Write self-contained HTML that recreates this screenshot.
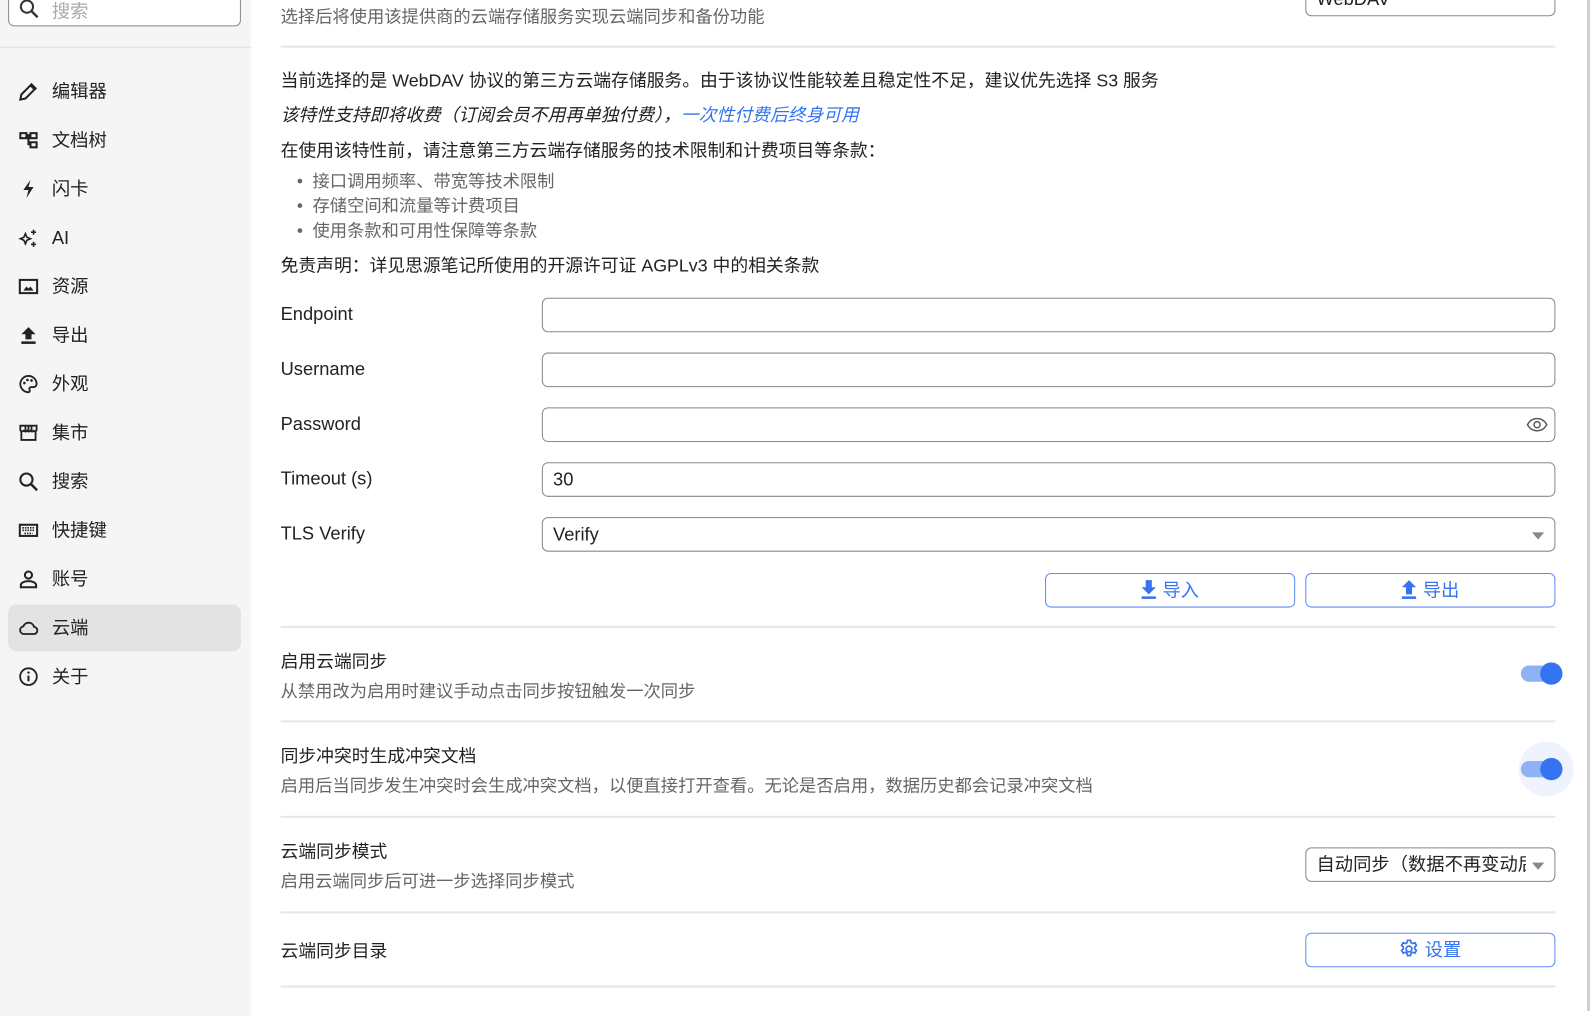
<!DOCTYPE html>
<html><head><meta charset="utf-8"><style>
*{box-sizing:border-box;margin:0;padding:0}
body{width:1592px;height:1011px;overflow:hidden;background:#fff;font-family:"Liberation Sans","Noto Sans CJK SC",sans-serif;color:#222;position:relative}
#wrap{position:absolute;left:0;top:0;width:1566px;height:995px;transform:scale(1.0166,1.016);transform-origin:0 0}
.a{position:absolute;white-space:nowrap}
#side{position:absolute;left:0;top:0;width:247px;height:1000px;background:#f5f5f5}
.mi{position:absolute;left:8px;width:229px;height:46px;font-size:18px;color:#222;line-height:46px;padding-left:43px}
.mi svg{position:absolute;left:10px;top:13px}
.mi.act{background:#e3e3e3;border-radius:8px}
.t{font-size:17.5px;color:#222}
.d{font-size:17px;color:#666}
.hr{position:absolute;left:276px;width:1254px;height:2px;background:#e6e6e6}
.inp{position:absolute;left:533px;width:997px;height:34px;border:1px solid #888;border-radius:6px;font-size:18px;line-height:32px;padding-left:10px}
.lb{position:absolute;left:276px;font-size:18px;color:#222}
.btn{position:absolute;height:34px;border:1px solid #5b8def;border-radius:6px;color:#3574f0;font-size:18px;line-height:32px;text-align:center}
.tg{position:absolute;left:1496px;width:40px;height:16px;border-radius:8px;background:#8fb1f5}
.tg:after{content:"";position:absolute;right:-1px;top:-3px;width:22px;height:22px;border-radius:50%;background:#3574f0}
.tri{display:inline-block;width:0;height:0;border-left:6px solid transparent;border-right:6px solid transparent;border-top:7px solid #888}
</style></head><body>
<div id="wrap">
<div id="side">
 <div class="a" style="left:8px;top:-8px;width:229px;height:34px;border:1px solid #888;border-radius:6px;background:#fff"></div>
 <svg class="a" style="left:18px;top:-2px" width="22" height="22" viewBox="0 0 22 22"><circle cx="8.5" cy="8.5" r="6" fill="none" stroke="#333" stroke-width="2"/><path d="M13 13l6 6" stroke="#333" stroke-width="2.4"/></svg>
 <div class="a" style="left:51px;top:-3px;font-size:18px;color:#aaa">搜索</div>
 <div class="a" style="left:0;top:46px;width:247px;height:1px;background:#e0e0e0"></div>
 <div class="mi" style="top:67px"><svg width="20" height="20" viewBox="0 0 20 20"><path d="M2 18l1-5L13 3l4 4L7 17z M12 4l4 4" fill="none" stroke="#222" stroke-width="2"/></svg>编辑器</div>
 <div class="mi" style="top:115px"><svg width="20" height="20" viewBox="0 0 20 20"><path d="M2 3h6v5H2z M12 3h6v5h-6z M12 12h6v5h-6z M8 5h4 M10 5v9h2" fill="none" stroke="#222" stroke-width="2"/></svg>文档树</div>
 <div class="mi" style="top:163px"><svg width="20" height="20" viewBox="0 0 20 20"><path d="M12 1L5 11h5l-2 8 7-11h-5z" fill="#222"/></svg>闪卡</div>
 <div class="mi" style="top:211px"><svg width="20" height="20" viewBox="0 0 20 20"><path d="M7 6l1.5 3.5L12 11l-3.5 1.5L7 16l-1.5-3.5L2 11l3.5-1.5z" fill="none" stroke="#222" stroke-width="1.6"/><path d="M15 2v5M12.5 4.5h5M15 14v5M12.5 16.5h5" stroke="#222" stroke-width="1.6"/></svg>AI</div>
 <div class="mi" style="top:259px"><svg width="20" height="20" viewBox="0 0 20 20"><rect x="1.5" y="3.5" width="17" height="13" fill="none" stroke="#222" stroke-width="2"/><path d="M5 14l3-4 2 2 2-2 3 4z" fill="#222"/></svg>资源</div>
 <div class="mi" style="top:307px"><svg width="20" height="20" viewBox="0 0 20 20"><path d="M10 2l7 7h-4v5H7V9H3z" fill="#222"/><rect x="3" y="16" width="14" height="2.5" fill="#222"/></svg>导出</div>
 <div class="mi" style="top:355px"><svg width="20" height="20" viewBox="0 0 20 20"><path d="M10 2a8 8 0 1 0 0 16c1.5 0 1.5-1.5 1-2.5s0-2.5 2-2.5h2a3 3 0 0 0 3-3c0-4.5-3.5-8-8-8z" fill="none" stroke="#222" stroke-width="1.8"/><circle cx="6" cy="9" r="1.3" fill="#222"/><circle cx="9" cy="6" r="1.3" fill="#222"/><circle cx="13" cy="6.5" r="1.3" fill="#222"/></svg>外观</div>
 <div class="mi" style="top:403px"><svg width="20" height="20" viewBox="0 0 20 20"><path d="M2 3h16v4c0 1.5-2 2-2.7 1-.7 1-2.6 1-3.3 0-.7 1-2.6 1-3.3 0-.7 1-2.7 1-3.4 0C4 9 2 8.5 2 7z M3 9v8h14V9 M7 3v5M10 3v5M13 3v5" fill="none" stroke="#222" stroke-width="1.8"/></svg>集市</div>
 <div class="mi" style="top:451px"><svg width="20" height="20" viewBox="0 0 20 20"><circle cx="8" cy="8" r="6" fill="none" stroke="#222" stroke-width="2"/><path d="M12.5 12.5l6 6" stroke="#222" stroke-width="2.4"/></svg>搜索</div>
 <div class="mi" style="top:499px"><svg width="20" height="20" viewBox="0 0 20 20"><rect x="1.5" y="4.5" width="17" height="11" fill="none" stroke="#222" stroke-width="2"/><path d="M4 7.5h12M4 10h12M6 13h8" stroke="#222" stroke-width="1.6" stroke-dasharray="1.5 1"/></svg>快捷键</div>
 <div class="mi" style="top:547px"><svg width="20" height="20" viewBox="0 0 20 20"><circle cx="10" cy="6" r="3.5" fill="none" stroke="#222" stroke-width="2"/><path d="M2.5 18v-2c0-2.5 3.5-4 7.5-4s7.5 1.5 7.5 4v2z" fill="none" stroke="#222" stroke-width="2"/></svg>账号</div>
 <div class="mi act" style="top:595px"><svg width="20" height="20" viewBox="0 0 20 20"><path d="M5 16h10a3.5 3.5 0 0 0 .5-7A5.5 5.5 0 0 0 5 8.5 3.8 3.8 0 0 0 5 16z" fill="none" stroke="#222" stroke-width="1.8"/></svg>云端</div>
 <div class="mi" style="top:643px"><svg width="20" height="20" viewBox="0 0 20 20"><circle cx="10" cy="10" r="8.2" fill="none" stroke="#222" stroke-width="1.8"/><path d="M10 9v5.5" stroke="#222" stroke-width="2"/><circle cx="10" cy="6" r="1.2" fill="#222"/></svg>关于</div>
</div>

<div class="a d" style="left:276px;top:2px">选择后将使用该提供商的云端存储服务实现云端同步和备份功能</div>
<div class="a" style="left:1284px;top:-18px;width:246px;height:34px;border:1px solid #888;border-radius:6px;font-size:18px;padding-left:10px;line-height:32px">WebDAV</div>
<div class="hr" style="top:45px"></div>

<div class="a t" style="left:276px;top:66px">当前选择的是 WebDAV 协议的第三方云端存储服务。由于该协议性能较差且稳定性不足，建议优先选择 S3 服务</div>
<div class="a t" style="left:276px;top:100px;font-style:italic">该特性支持即将收费（订阅会员不用再单独付费），<span style="color:#3574f0">一次性付费后终身可用</span></div>
<div class="a t" style="left:276px;top:135px">在使用该特性前，请注意第三方云端存储服务的技术限制和计费项目等条款：</div>
<div class="a d" style="left:292px;top:164px">•&nbsp;&nbsp;接口调用频率、带宽等技术限制</div>
<div class="a d" style="left:292px;top:188px">•&nbsp;&nbsp;存储空间和流量等计费项目</div>
<div class="a d" style="left:292px;top:213px">•&nbsp;&nbsp;使用条款和可用性保障等条款</div>
<div class="a t" style="left:276px;top:248px">免责声明：详见思源笔记所使用的开源许可证 AGPLv3 中的相关条款</div>

<div class="lb" style="top:299px">Endpoint</div><div class="inp" style="top:293px"></div>
<div class="lb" style="top:353px">Username</div><div class="inp" style="top:347px"></div>
<div class="lb" style="top:407px">Password</div><div class="inp" style="top:401px"><svg class="a" style="right:6px;top:8px" width="22" height="16" viewBox="0 0 22 16"><path d="M1.5 8C4 3.5 7.5 2 11 2s7 1.5 9.5 6c-2.5 4.5-6 6-9.5 6S4 12.5 1.5 8z" fill="none" stroke="#555" stroke-width="1.4"/><circle cx="11" cy="8" r="3" fill="none" stroke="#555" stroke-width="1.4"/></svg></div>
<div class="lb" style="top:461px">Timeout (s)</div><div class="inp" style="top:455px">30</div>
<div class="lb" style="top:515px">TLS Verify</div><div class="inp" style="top:509px;background:#fff">Verify<span class="tri a" style="right:10px;top:14px"></span></div>

<div class="btn" style="left:1028px;top:564px;width:246px"><svg width="16" height="20" viewBox="0 0 16 20" style="vertical-align:-3px"><path d="M5 1h6v7h4l-7 7-7-7h4z" fill="#3574f0"/><rect x="1" y="17" width="14" height="2.5" fill="#3574f0"/></svg> 导入</div>
<div class="btn" style="left:1284px;top:564px;width:246px"><svg width="16" height="20" viewBox="0 0 16 20" style="vertical-align:-3px"><path d="M8 1l7 7h-4v7H5V8H1z" fill="#3574f0"/><rect x="1" y="17" width="14" height="2.5" fill="#3574f0"/></svg> 导出</div>
<div class="hr" style="top:616px"></div>

<div class="a t" style="left:276px;top:638px">启用云端同步</div>
<div class="a d" style="left:276px;top:666px">从禁用改为启用时建议手动点击同步按钮触发一次同步</div>
<div class="tg" style="top:655px"></div>
<div class="hr" style="top:709px"></div>

<div class="a t" style="left:276px;top:731px">同步冲突时生成冲突文档</div>
<div class="a d" style="left:276px;top:759px">启用后当同步发生冲突时会生成冲突文档，以便直接打开查看。无论是否启用，数据历史都会记录冲突文档</div>
<div class="a" style="left:1494px;top:730px;width:54px;height:54px;border-radius:50%;background:#eef3fd"></div>
<div class="tg" style="top:749px"></div>
<div class="hr" style="top:803px"></div>

<div class="a t" style="left:276px;top:825px">云端同步模式</div>
<div class="a d" style="left:276px;top:853px">启用云端同步后可进一步选择同步模式</div>
<div class="a" style="left:1284px;top:834px;width:246px;height:34px;border:1px solid #888;border-radius:6px;font-size:18px;line-height:32px"><div class="a" style="left:10px;top:0;width:206px;overflow:hidden">自动同步（数据不再变动后</div><span class="tri a" style="right:10px;top:14px"></span></div>
<div class="hr" style="top:897px"></div>

<div class="a t" style="left:276px;top:923px">云端同步目录</div>
<div class="btn" style="left:1284px;top:918px;width:246px"><svg width="20" height="20" viewBox="0 0 20 20" style="vertical-align:-3px"><path d="M8.5 1.5h3l.5 2.3 1.6.9 2.2-.8 1.5 2.6-1.7 1.6v1.8l1.7 1.6-1.5 2.6-2.2-.8-1.6.9-.5 2.3h-3l-.5-2.3-1.6-.9-2.2.8-1.5-2.6 1.7-1.6V8.1L2.7 6.5l1.5-2.6 2.2.8L8 3.8z" fill="none" stroke="#3574f0" stroke-width="1.7"/><circle cx="10" cy="10" r="2.8" fill="none" stroke="#3574f0" stroke-width="1.7"/></svg> 设置</div>
<div class="hr" style="top:970px"></div>
</div>
<div class="a" style="left:1587px;top:0;width:3px;height:1011px;background:#d0d0d0"></div>
</body></html>
